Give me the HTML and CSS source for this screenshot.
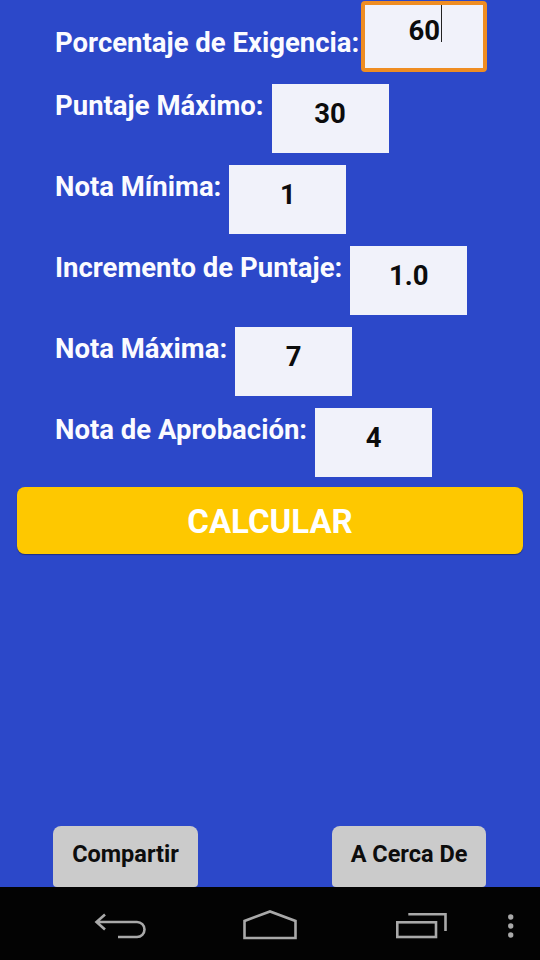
FILE: index.html
```html
<!DOCTYPE html>
<html lang="es">
<head>
<meta charset="utf-8">
<title>Calculadora de Notas</title>
<link rel="stylesheet" href="styles.css">
</head>
<body>
<div class="screen">
  <main class="content">
    <div class="form">
      <div class="row row-first">
        <span class="label">Porcentaje de Exigencia:</span>
        <div class="field field-focus"><span class="value">60<span class="caret"></span></span></div>
      </div>
      <div class="row">
        <span class="label">Puntaje Máximo:</span>
        <div class="field"><span class="value">30</span></div>
      </div>
      <div class="row">
        <span class="label">Nota Mínima:</span>
        <div class="field"><span class="value">1</span></div>
      </div>
      <div class="row">
        <span class="label">Incremento de Puntaje:</span>
        <div class="field"><span class="value">1.0</span></div>
      </div>
      <div class="row">
        <span class="label">Nota Máxima:</span>
        <div class="field"><span class="value">7</span></div>
      </div>
      <div class="row">
        <span class="label">Nota de Aprobación:</span>
        <div class="field"><span class="value">4</span></div>
      </div>
    </div>
    <button class="calc">CALCULAR</button>
    <div class="footer">
      <button class="small-btn btn-share">Compartir</button>
      <button class="small-btn btn-about">A Cerca De</button>
    </div>
  </main>
  <nav class="navbar">
    <svg class="nav-icons" width="540" height="73" viewBox="0 0 540 73" fill="none" stroke="#a9a9a9" stroke-width="2.6">
      <path d="M105 27.5 L96.5 35 L105 42.5 M96.5 35 H137 A7.5 7.5 0 0 1 137 50 H118"/>
      <path d="M244.5 51 V34 L270 24.5 L295.5 34 V51 Z" stroke-linejoin="miter"/>
      <rect x="397.3" y="35.3" width="38.7" height="14.7"/>
      <path d="M408.3 27.3 H445.5 V44"/>
      <g fill="#a9a9a9" stroke="none">
        <circle cx="510.7" cy="30" r="2.7"/>
        <circle cx="510.7" cy="39" r="2.7"/>
        <circle cx="510.7" cy="48" r="2.7"/>
      </g>
    </svg>
  </nav>
</div>
</body>
</html>
```
FILE: styles.css
```css
* { box-sizing: border-box; }
html, body { margin: 0; padding: 0; }
body {
  width: 540px;
  height: 960px;
  font-family: "Roboto", "Liberation Sans", sans-serif;
  background: #2c48c9;
}
.screen {
  display: flex;
  flex-direction: column;
  height: 960px;
}
.content {
  flex: 1;
  display: flex;
  flex-direction: column;
  background: #2c48c9;
}
.form {
  display: flex;
  flex-direction: column;
  gap: 12px;
  padding: 1px 0 0 55px;
}
.row {
  display: flex;
  align-items: flex-start;
}
.label {
  color: #fbfbff;
  font-weight: 700;
  font-size: 27.5px;
  line-height: 32px;
  margin-top: 5.5px;
  white-space: nowrap;
}
.row-first .label { margin-top: 25.5px; }
.field {
  width: 117px;
  height: 69px;
  margin-left: 8px;
  background: #f1f2fa;
  text-align: center;
  padding-top: 15px;
  font-size: 27.5px;
  font-weight: 700;
  line-height: 30px;
  color: #0c0c0c;
}
.field-focus {
  width: 126px;
  height: 71px;
  margin-left: 2px;
  border: 4px solid #ef8d22;
  border-radius: 4px;
  padding-top: 11px;
}
.value { position: relative; }
.caret {
  position: absolute;
  right: -2px;
  top: -9px;
  width: 1.5px;
  height: 37px;
  background: #222;
}
.calc {
  margin: 10px 17px 0 17px;
  height: 67px;
  border: none;
  border-radius: 8px;
  background: #fec800;
  box-shadow: 0 1px 1px rgba(0, 0, 0, 0.35);
  color: #ffffff;
  font-family: "Roboto", "Liberation Sans", sans-serif;
  font-weight: 700;
  font-size: 33px;
  padding: 0;
  padding-top: 2px;
}
.footer {
  margin-top: auto;
  display: flex;
  justify-content: space-between;
  padding: 0 54px 0 53px;
}
.small-btn {
  height: 61px;
  border: none;
  border-radius: 8px 8px 4px 4px;
  background: #cbcbcb;
  color: #0d0d0d;
  font-family: "Roboto", "Liberation Sans", sans-serif;
  font-weight: 700;
  font-size: 23.5px;
  padding: 0;
  padding-bottom: 6px;
}
.btn-share { width: 145px; }
.btn-about { width: 154px; }
.navbar {
  height: 73px;
  background: #030303;
}
.nav-icons { display: block; }
```
